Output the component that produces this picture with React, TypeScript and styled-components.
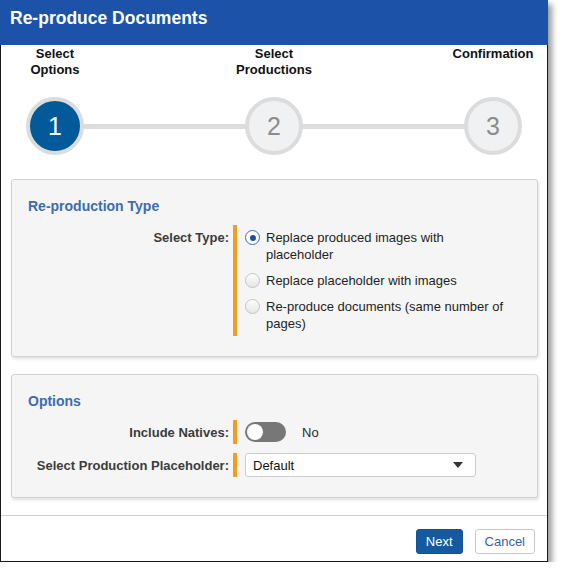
import React from "react";
import styled, { createGlobalStyle } from "styled-components";

const GlobalStyle = createGlobalStyle`
  html, body {
    margin: 0;
    padding: 0;
    background: #ffffff;
  }
  body {
    font-family: "Liberation Sans", Arial, sans-serif;
    font-size: 13px;
    color: #222;
  }
`;

const Dialog = styled.div`
  width: 546px;
  border: 1px solid #1a1a1a;
  border-top: none;
  background: #ffffff;
  box-shadow: 4px 4px 6px rgba(0, 0, 0, 0.4);
`;

const Header = styled.div`
  height: 45px;
  margin: 0 -1px;
  padding: 8px 10px 0;
  box-sizing: border-box;
  background: #1c52a7;
  color: #ffffff;
  font-size: 17.5px;
  font-weight: bold;
  line-height: 20px;
`;

const StepLabels = styled.div`
  display: flex;
  justify-content: space-between;
  padding: 1px 9px 0;
`;

const StepLabel = styled.div`
  width: 90px;
  text-align: center;
  font-size: 13px;
  font-weight: bold;
  line-height: 16px;
  color: #111;
`;

const StepTrack = styled.div`
  display: flex;
  align-items: center;
  padding: 0 25px;
  margin-top: 19px;
`;

const Connector = styled.div`
  flex: 1;
  height: 5px;
  margin: 0 -2px;
  background: #dddddd;
`;

const StepCircle = styled.div<{ $active?: boolean }>`
  position: relative;
  z-index: 1;
  width: 58px;
  height: 58px;
  box-sizing: border-box;
  border-radius: 50%;
  border: 4px solid #dcdcdc;
  background: ${({ $active }) => ($active ? "#035a9a" : "#f0f1f2")};
  color: ${({ $active }) => ($active ? "#ffffff" : "#8c8c8c")};
  display: flex;
  align-items: center;
  justify-content: center;
  font-size: 25px;
`;

const Panel = styled.div<{ $top: number }>`
  margin: ${({ $top }) => $top}px 9px 0 10px;
  padding: 18px 16px 20px;
  background: #f5f5f5;
  border: 1px solid #d2d2d2;
  border-radius: 3px;
  box-shadow: 1px 2px 3px rgba(0, 0, 0, 0.12);
`;

const PanelTitle = styled.div`
  color: #3a6db3;
  font-size: 14px;
  font-weight: bold;
  line-height: 16px;
  margin-bottom: 11px;
`;

const Row = styled.div<{ $align?: string }>`
  display: flex;
  align-items: ${({ $align }) => $align || "center"};
  & + & {
    margin-top: 9px;
  }
`;

const Label = styled.div<{ $pad?: number }>`
  width: 201px;
  padding: ${({ $pad }) => $pad || 0}px 4px 0 0;
  text-align: right;
  font-weight: bold;
  color: #3c3c3c;
  line-height: 17px;
  flex-shrink: 0;
`;

const Control = styled.div<{ $pad?: number }>`
  display: flex;
  align-items: center;
  border-left: 4px solid #f39c1f;
  padding: ${({ $pad }) => $pad || 0}px 0 ${({ $pad }) => $pad || 0}px 8px;
`;

const RadioList = styled.div`
  display: flex;
  flex-direction: column;
  gap: 9px;
`;

const RadioOption = styled.label`
  display: flex;
  align-items: flex-start;
  line-height: 17px;
  color: #1e1e1e;
`;

const RadioDot = styled.span<{ $checked?: boolean }>`
  width: 15px;
  height: 15px;
  box-sizing: border-box;
  margin: 1px 6px 0 0;
  border-radius: 50%;
  flex-shrink: 0;
  display: flex;
  align-items: center;
  justify-content: center;
  border: 1px solid ${({ $checked }) => ($checked ? "#3d6eb4" : "#c4c4c4")};
  background: ${({ $checked }) =>
    $checked ? "#ffffff" : "linear-gradient(#fdfdfd, #e6e6e6)"};

  &::after {
    content: "";
    display: ${({ $checked }) => ($checked ? "block" : "none")};
    width: 6px;
    height: 6px;
    border-radius: 50%;
    background: #1e4f99;
  }
`;

const RadioText = styled.span`
  width: 243px;
`;

const Toggle = styled.div`
  width: 41px;
  height: 20px;
  box-sizing: border-box;
  padding: 2px;
  border-radius: 10px;
  background: #777777;
  display: flex;
  align-items: center;
`;

const Knob = styled.span`
  width: 16px;
  height: 16px;
  border-radius: 50%;
  background: #ffffff;
`;

const ToggleText = styled.span`
  margin-left: 16px;
  color: #2a2a2a;
`;

const Select = styled.div`
  width: 231px;
  height: 24px;
  box-sizing: border-box;
  padding: 0 12px 0 7px;
  background: #ffffff;
  border: 1px solid #cccccc;
  border-radius: 3px;
  display: flex;
  align-items: center;
  justify-content: space-between;
  color: #111;
`;

const Caret = styled.span`
  width: 0;
  height: 0;
  border-left: 5px solid transparent;
  border-right: 5px solid transparent;
  border-top: 6px solid #333333;
`;

const Footer = styled.div`
  margin-top: 17px;
  border-top: 1px solid #cfcfcf;
  padding: 13px 12px 7px;
  display: flex;
  justify-content: flex-end;
  gap: 12px;
`;

const Button = styled.button<{ $primary?: boolean }>`
  height: 25px;
  padding: 0 9px;
  border-radius: 3px;
  font-family: "Liberation Sans", Arial, sans-serif;
  font-size: 13px;
  cursor: pointer;
  border: 1px solid ${({ $primary }) => ($primary ? "#12528f" : "#c8c8c8")};
  background: ${({ $primary }) => ($primary ? "#155a9f" : "#ffffff")};
  color: ${({ $primary }) => ($primary ? "#ffffff" : "#2f64b1")};
`;

const steps = [
  { label: ["Select", "Options"], n: 1 },
  { label: ["Select", "Productions"], n: 2 },
  { label: ["Confirmation"], n: 3 },
];

const types = [
  "Replace produced images with placeholder",
  "Replace placeholder with images",
  "Re-produce documents (same number of pages)",
];

export default function App() {
  return (
    <>
      <GlobalStyle />
      <Dialog>
        <Header>Re-produce Documents</Header>

        <StepLabels>
          {steps.map((s) => (
            <StepLabel key={s.n}>
              {s.label.map((l) => (
                <div key={l}>{l}</div>
              ))}
            </StepLabel>
          ))}
        </StepLabels>

        <StepTrack>
          {steps.map((s, i) => (
            <React.Fragment key={s.n}>
              {i > 0 && <Connector />}
              <StepCircle $active={s.n === 1}>{s.n}</StepCircle>
            </React.Fragment>
          ))}
        </StepTrack>

        <Panel $top={24}>
          <PanelTitle>Re-production Type</PanelTitle>
          <Row $align="flex-start">
            <Label $pad={4}>Select Type:</Label>
            <Control $pad={4}>
              <RadioList>
                {types.map((t, i) => (
                  <RadioOption key={t}>
                    <RadioDot $checked={i === 0} />
                    <RadioText>{t}</RadioText>
                  </RadioOption>
                ))}
              </RadioList>
            </Control>
          </Row>
        </Panel>

        <Panel $top={17}>
          <PanelTitle>Options</PanelTitle>
          <Row>
            <Label>Include Natives:</Label>
            <Control $pad={2}>
              <Toggle>
                <Knob />
              </Toggle>
              <ToggleText>No</ToggleText>
            </Control>
          </Row>
          <Row>
            <Label>Select Production Placeholder:</Label>
            <Control>
              <Select>
                <span>Default</span>
                <Caret />
              </Select>
            </Control>
          </Row>
        </Panel>

        <Footer>
          <Button $primary>Next</Button>
          <Button>Cancel</Button>
        </Footer>
      </Dialog>
    </>
  );
}
